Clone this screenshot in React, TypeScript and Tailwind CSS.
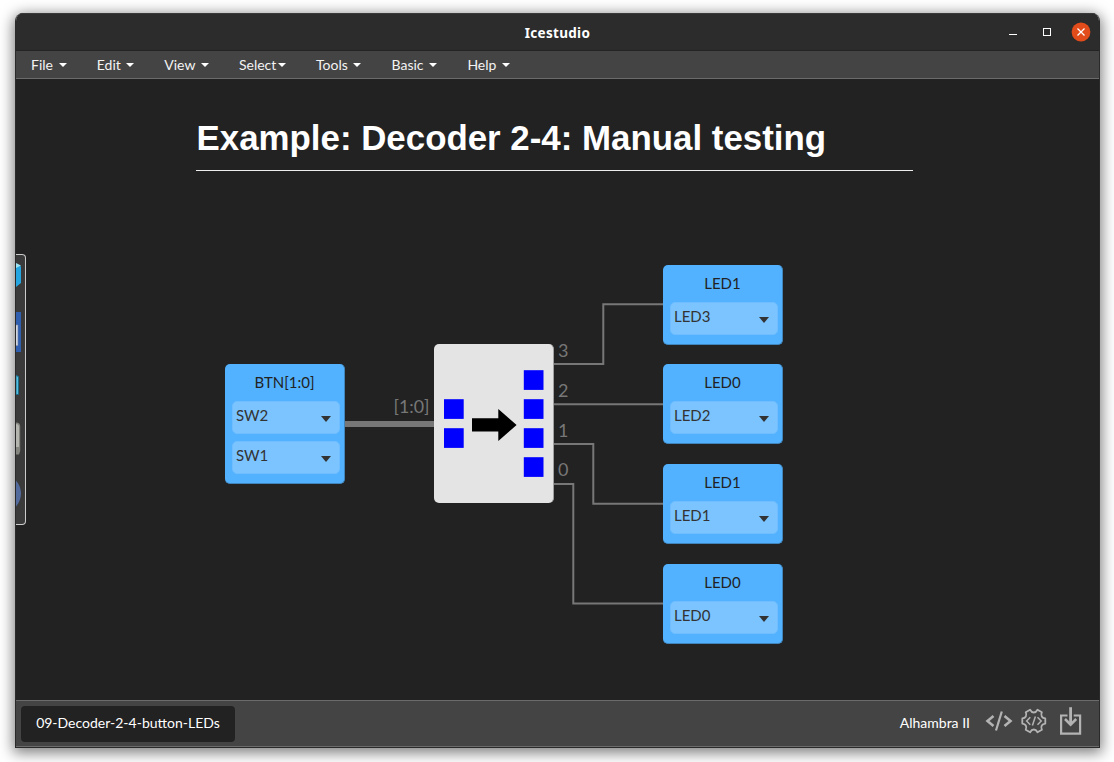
import React from "react";

const MENUS = [
  { label: "File", caret: "ml-[5.8px]" },
  { label: "Edit", caret: "ml-[5.5px]" },
  { label: "View", caret: "ml-[5.5px]" },
  { label: "Select", caret: "ml-[1.7px]" },
  { label: "Tools", caret: "ml-[5.7px]" },
  { label: "Basic", caret: "ml-[5.9px]" },
  { label: "Help", caret: "ml-[5.9px]" },
];

function TitleBar() {
  return (
    <header className="relative flex h-[38px] shrink-0 items-center justify-center border-b border-[#232323] bg-[#2c2c2c] pt-[3px] shadow-[inset_0_1px_0_#3a3a3a]">
      <span className="font-['Noto_Sans',sans-serif] text-[13.5px] font-bold tracking-[0.3px] text-white">Icestudio</span>
      <svg className="absolute -right-px top-0" width="104" height="38" viewBox="0 0 104 38">
        <path d="M13 21.5h8" stroke="#fff" />
        <rect x="47.5" y="15.5" width="7" height="7" fill="none" stroke="#fff" />
        <circle cx="85" cy="19" r="9.4" fill="#e24b1a" />
        <path d="M81.5 15.5l7 7m0-7l-7 7" stroke="#fff" strokeWidth="1.3" />
      </svg>
    </header>
  );
}

function MenuBar() {
  return (
    <nav className="flex h-7 shrink-0 items-center border-b border-[#6b6b6b] bg-[#444] text-sm text-[#f3f3f3]">
      {MENUS.map((m) => (
        <button key={m.label} className="flex items-center px-[15px] leading-5">
          {m.label}
          <span className={`mt-px h-0 w-0 border-x-4 border-t-4 border-x-transparent border-t-white ${m.caret}`} />
        </button>
      ))}
    </nav>
  );
}

function Select({ value }: { value: string }) {
  return (
    <div className="flex h-[33px] w-[108px] items-start justify-between rounded-[5px] border border-[#70beff] bg-[#7bc4ff] pl-[3.5px] pr-2 text-[15px] text-[#333]">
      <span className="mt-[3px] leading-5">{value}</span>
      <svg className="mt-[14px]" width="10" height="6" viewBox="0 0 10 6">
        <path d="M0 0h10L5 6z" fill="#333" />
      </svg>
    </div>
  );
}

function IoBlock({ title, values, place }: { title: string; values: string[]; place: string }) {
  return (
    <div
      className={`absolute flex w-[120px] flex-col items-center rounded-[5px] border-b border-r border-[#4085bb] bg-[#52b2ff] pb-2 ${place}`}
    >
      <div className="flex h-[37px] items-center text-[15px] text-[#222]">{title}</div>
      <div className="ml-[2px] flex flex-col gap-[7px] pb-px">
        {values.map((v) => (
          <Select key={v} value={v} />
        ))}
      </div>
    </div>
  );
}

function Wires() {
  return (
    <svg className="absolute left-0 top-0" width="1083" height="621" viewBox="16 79 1083 621">
      <g fill="none" stroke="#777" strokeWidth="2">
        <path d="M344 424h90" strokeWidth="6" />
        <path d="M553 364h50.3V304.3H663" />
        <path d="M553 404.3h110" />
        <path d="M553 444h40.3v59.7H663" />
        <path d="M553 484h20.3v119.5H663" />
      </g>
    </svg>
  );
}

function Decoder() {
  return (
    <div className="absolute left-[418px] top-[265px] h-[159px] w-[120px] rounded-[5px] border-r border-[#a0a0a0] bg-[#e4e4e4]">
      <svg width="119" height="159" viewBox="434 344 119 159">
        <g fill="#00f">
          <rect x="444" y="399.2" width="19.7" height="19.7" />
          <rect x="444" y="428.2" width="19.7" height="19.7" />
          <rect x="523.8" y="370.2" width="19.7" height="19.7" />
          <rect x="523.8" y="399.2" width="19.7" height="19.7" />
          <rect x="523.8" y="428.2" width="19.7" height="19.7" />
          <rect x="523.8" y="457.2" width="19.7" height="19.7" />
        </g>
        <path d="M472 418.3h26.3v-9.2L516.6 425l-18.3 16v-9.5H472z" fill="#000" />
      </svg>
    </div>
  );
}

function Toolbox() {
  return (
    <div className="absolute left-0 top-[175px] h-[271px] w-[10px] overflow-hidden rounded-r-[4px] border border-l-0 border-[#ccc] bg-[#3a3a3a]">
      <svg width="9" height="269" viewBox="16 255 9 269">
        <path d="M16 264l5 2.5V283L16 287z" fill="#25a6e0" />
        <path d="M16 263l5 2.5L16 268z" fill="#9ce3f3" />
        <path d="M16 312h5v40h-5z" fill="#315fb0" />
        <path d="M16 325h1.8v20.5H16z" fill="#eef2f8" stroke="#8b96a8" strokeWidth=".6" />
        <path d="M16 375.5l2.4 1v18H16z" fill="#5fc8e8" stroke="#176e8c" />
        <path d="M16 422.5c3 0 4.2 1.2 4.2 4V451l-1.2 3.5h-3z" fill="#85857f" />
        <path d="M16 424c2 0 3 1.2 3 3v20H16z" fill="#b5b5b0" />
        <path d="M16 480.5c6.7 8 6.7 18 0 26z" fill="#526a9c" />
      </svg>
    </div>
  );
}

function Canvas() {
  return (
    <main className="relative min-h-0 flex-1 overflow-hidden bg-[#222]">
      <h1 className="absolute left-[180.5px] top-[38px] w-[717px] whitespace-nowrap font-['Liberation_Sans',sans-serif] text-[34.86px] font-bold leading-[42px] text-white">
        Example: Decoder 2-4: Manual testing
      </h1>
      <div className="absolute left-[180.4px] top-[90.5px] h-[1.5px] w-[717px] bg-[#eee]" />
      <Toolbox />
      <Wires />
      <IoBlock title="BTN[1:0]" values={["SW2", "SW1"]} place="left-[209px] top-[285px]" />
      <Decoder />
      <div className="text-lg leading-5 text-[#777]">
        <span className="absolute left-[377.5px] top-[317px] text-[17.8px]">[1:0]</span>
        <span className="absolute left-[542px] top-[261px]">3</span>
        <span className="absolute left-[542px] top-[301px]">2</span>
        <span className="absolute left-[542px] top-[341px]">1</span>
        <span className="absolute left-[542px] top-[380px]">0</span>
      </div>
      <IoBlock title="LED1" values={["LED3"]} place="left-[647px] top-[186px]" />
      <IoBlock title="LED0" values={["LED2"]} place="left-[647px] top-[285px]" />
      <IoBlock title="LED1" values={["LED1"]} place="left-[647px] top-[385px]" />
      <IoBlock title="LED0" values={["LED0"]} place="left-[647px] top-[485px]" />
    </main>
  );
}

function Footer() {
  return (
    <footer className="flex h-[47px] shrink-0 items-center justify-between border-y border-[#6b6b6b] bg-[#444] pl-[5px] pr-[17px] text-sm text-white">
      <div className="flex h-9 w-[214px] items-center justify-center rounded bg-[#222] pb-0.5">
        09-Decoder-2-4-button-LEDs
      </div>
      <div className="flex items-center pb-[3px]">
        <span className="mr-[15px] pt-px">Alhambra II</span>
        <svg width="97" height="42" viewBox="985 701 97 42" fill="none" stroke="#b3b3b3">
          <path d="M993.5 716l-6 5 6 5M1004.5 716l6 5-6 5" strokeWidth="2.6" />
          <path d="M1001.8 711.5l-5.8 19" strokeWidth="2.2" />
          <path
            d="M1037.5 709.7L1041.9 712.2C1040.3 715.5 1042 718.1 1045.3 718.4V723.6C1042 723.9 1040.3 726.5 1041.9 729.8L1037.5 732.3C1035.5 728.6 1032.1 728.6 1030.1 732.3L1025.7 729.8C1027.3 726.5 1025.6 723.9 1022.3 723.6V718.4C1025.6 718.1 1027.3 715.5 1025.7 712.2L1030.1 709.7C1032.1 713.4 1035.5 713.4 1037.5 709.7Z"
            strokeWidth="1.8"
            strokeLinejoin="round"
          />
          <path d="M1030.3 717.3l-3.7 3.7 3.7 3.7M1037.5 717.3l3.7 3.7-3.7 3.7M1035.4 716.5l-3 9" strokeWidth="1.5" />
          <path d="M1067.5 715.5h-6.4v18.2h19v-18.2h-6.4" strokeWidth="2.2" />
          <path d="M1070.6 707.2v16.5" strokeWidth="2.8" />
          <path d="M1065 719l5.6 5.6 5.6-5.6" strokeWidth="2.6" />
        </svg>
      </div>
    </footer>
  );
}

export default function App() {
  return (
    <div className="h-[762px] w-[1114px] overflow-hidden bg-white pl-[15px] pt-[13px] font-[Lato,sans-serif]">
      <div className="flex h-[735px] w-[1085px] flex-col overflow-hidden rounded-t-lg border border-t-0 border-[#2a2a2a] shadow-[0_3px_14px_2px_rgba(0,0,0,0.5)]">
        <TitleBar />
        <MenuBar />
        <Canvas />
        <Footer />
      </div>
    </div>
  );
}
